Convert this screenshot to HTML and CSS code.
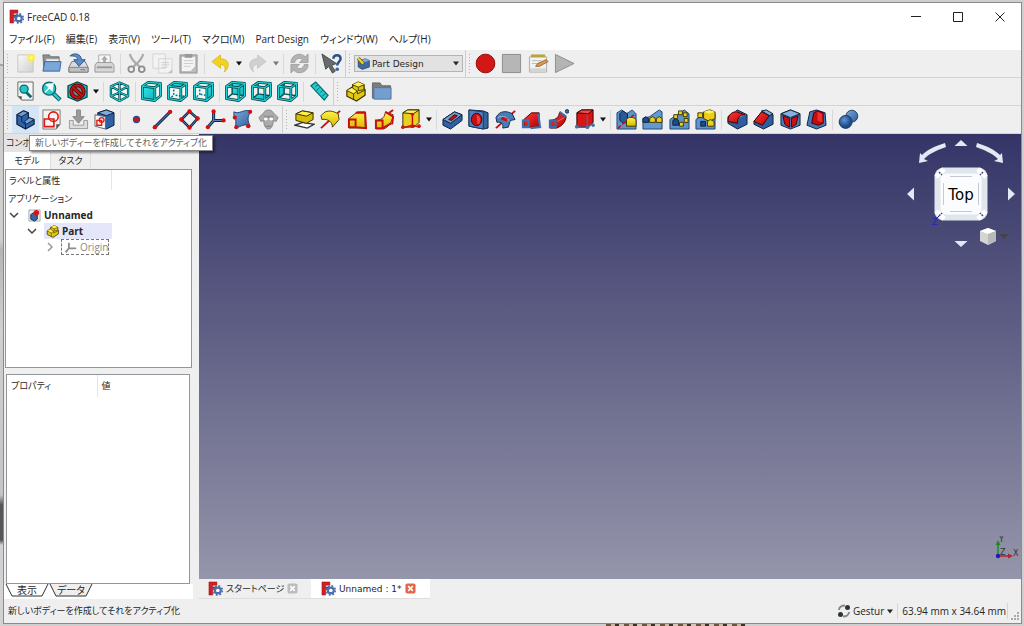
FILE: index.html
```html
<!DOCTYPE html>
<html lang="ja">
<head>
<meta charset="utf-8">
<title>FreeCAD 0.18</title>
<link rel="stylesheet" href="styles.css">
</head>
<body>
<svg class="sprite" aria-hidden="true">
<defs>
<linearGradient id="gGrey" x1="0" y1="0" x2="1" y2="1"><stop offset="0" stop-color="#fafafa"/><stop offset="1" stop-color="#d0d0d0"/></linearGradient>
<linearGradient id="gYel" x1="0" y1="0" x2="0" y2="1"><stop offset="0" stop-color="#fff04a"/><stop offset="1" stop-color="#d8b800"/></linearGradient>
<linearGradient id="gBlue" x1="0" y1="0" x2="1" y2="1"><stop offset="0" stop-color="#7fabd9"/><stop offset="1" stop-color="#2b5a9b"/></linearGradient>
<linearGradient id="gRed" x1="0" y1="0" x2="1" y2="1"><stop offset="0" stop-color="#f83b3b"/><stop offset="1" stop-color="#bb0000"/></linearGradient>
<linearGradient id="gTeal" x1="0" y1="0" x2="1" y2="1"><stop offset="0" stop-color="#35e5e8"/><stop offset="1" stop-color="#0bb5ba"/></linearGradient>
<radialGradient id="gGlow"><stop offset="0" stop-color="#fffde0"/><stop offset=".4" stop-color="#fff12e"/><stop offset="1" stop-color="#fff12e" stop-opacity="0"/></radialGradient>
<radialGradient id="gBall" cx=".4" cy=".35"><stop offset="0" stop-color="#5e97d6"/><stop offset="1" stop-color="#1f4a86"/></radialGradient>
</defs>
<symbol id="logo" viewBox="0 0 16 16"><path d="M1 1h8.500v3.500H5v2h4v3H5v5.500H1z" fill="#d01f26" stroke="#8d0e13" stroke-width=".5"/><circle cx="10.500" cy="10" r="4.800" fill="none" stroke="#4a6fae" stroke-width="1.800" stroke-dasharray="2 1.770"/><circle cx="10.500" cy="10" r="3" fill="none" stroke="#4a6fae" stroke-width="2.400"/><circle cx="10.500" cy="10" r="1.700" fill="#fff"/></symbol>
<symbol id="new" viewBox="0 0 22 22"><path d="M3 2h16v18H3z" fill="url(#gGrey)" stroke="#c5c5c0"/><circle cx="17" cy="5" r="5.500" fill="url(#gGlow)"/></symbol>
<symbol id="open" viewBox="0 0 22 22"><path d="M2 2h7l1 2h9v4H5L3 17z" fill="#8b8e8c" stroke="#6e7170"/><path d="M5 6h14v6H5z" fill="#efefef" stroke="#999"/><path d="M4 9h17l-1.500 10H2z" fill="#7aa6d8" stroke="#3c689f"/></symbol>
<symbol id="save" viewBox="0 0 22 22"><path d="M4 9h14l3 6v5H1v-5z" fill="#dcdcdc" stroke="#777"/><path d="M1 15h20v5H1z" fill="#c0c0c0" stroke="#808080"/><path d="M2 3c5-4 12-2 12 4h4l-6.500 7L6 7h4c0-3-3-4-8-4z" fill="#5d8bc3" stroke="#2b588f"/><path d="M13 17.500h5" stroke="#777"/></symbol>
<symbol id="print" viewBox="0 0 22 22"><path d="M5 2h12v9H5z" fill="#f7f7f7" stroke="#aaa"/><path d="m11 3 3.500 4h-2v3h-3V7h-2z" fill="#aaa"/><path d="M3 10h16l2 3v7H1v-7z" fill="#d7d7d7" stroke="#999"/><path d="M3 14h16v2H3z" fill="#999"/></symbol>
<symbol id="cut" viewBox="0 0 22 22"><path d="M4 1c1 5 5 9 10 13M18 1c-1 5-5 9-10 13" fill="none" stroke="#aaa" stroke-width="2.200"/><circle cx="5.500" cy="17" r="3" fill="none" stroke="#8d8d8d" stroke-width="1.900"/><circle cx="16.500" cy="17" r="3" fill="none" stroke="#8d8d8d" stroke-width="1.900"/></symbol>
<symbol id="copy" viewBox="0 0 22 22"><path d="M1 1h13v15H1zM7 6h14v15H7z" fill="#f3f3f3" stroke="#d4d4d4"/><path d="M10 10h8M10 12.500h8M10 15h6" stroke="#cdcdcd"/><path d="m17 21 4-4v4z" fill="#c0c0c0"/></symbol>
<symbol id="paste" viewBox="0 0 22 22"><path d="M2 2h18v19H2z" fill="#b4b4b4" stroke="#999"/><path d="M4 4h14v15H4z" fill="#f4f4f4"/><path d="M7 1h8v4H7z" fill="#999"/><path d="M6 8h10M6 11h10M6 14h7" stroke="#ccc"/><path d="m13 19 5-5v5z" fill="#bbb"/></symbol>
<symbol id="undo" viewBox="0 0 22 22"><path d="M2 9 11 2v4c9 0 11 8 4 14 2-5 0-8-4-8v4z" fill="#f2d322" stroke="#d3b60a" stroke-width=".8"/></symbol>
<symbol id="redo" viewBox="0 0 22 22"><path d="M20 9 11 2v4C2 6 0 14 7 20c-2-5 0-8 4-8v4z" fill="#d0d0d0" stroke="#c3c3c3" stroke-width=".8"/></symbol>
<symbol id="refresh" viewBox="0 0 22 22"><path d="M2 10c0-9 11-11 15-6l3-3v9h-9l3-3c-3-3-7-1-8 3zM20 12c0 9-11 11-15 6l-3 3v-9h9l-3 3c3 3 7 1 8-3z" fill="#b3b3b3" stroke="#999" stroke-width=".8"/></symbol>
<symbol id="whats" viewBox="0 0 22 22"><path d="m1 1 4 16 3-3 4 7 3-2-4-6 5-2z" fill="#666b6b" stroke="#454848"/><path d="M13 6c0-5 7.500-5 7.500 0 0 3-3.500 3-3.500 7" fill="none" stroke="#28518a" stroke-width="2.600"/><circle cx="17" cy="17" r="1.900" fill="#3465a4"/></symbol>
<symbol id="record" viewBox="0 0 22 22"><circle cx="11" cy="11" r="9.800" fill="#d41616" stroke="#8a0707"/></symbol>
<symbol id="stop" viewBox="0 0 22 22"><path d="M1.500 1.500h19v19h-19z" fill="#b6b6b6" stroke="#8b8b8b"/></symbol>
<symbol id="macro" viewBox="0 0 22 22"><path d="M1.500 4h18v16h-18z" fill="#f2f2f0" stroke="#aaa" /><path d="M2 16h17v4H2z" fill="#d4d4d2"/><path d="M3 1.500h15v3H3z" fill="#b5a642"/><path d="M4 8h10M4 11h6" stroke="#bbb"/><path d="m8 14 2-3 9-4 2 2-9 5z" fill="#e8953c" stroke="#70451b" stroke-width=".7"/></symbol>
<symbol id="play" viewBox="0 0 22 22"><path d="m1.500 1.500 19.500 9.500-19.500 9.500z" fill="#b4b4b4" stroke="#8c8c8c"/></symbol>
<symbol id="fitall" viewBox="0 0 22 22"><path d="M3 1h16v19H7l-4-4z" fill="#f4f4f2" stroke="#666"/><path d="m3 16 4 4v-4z" fill="#555"/><path d="m12 12 5 5" stroke="#096b70" stroke-width="3"/><circle cx="9.500" cy="8.500" r="4.300" fill="#22c7cb" stroke="#0a6a6e" stroke-width="1.300"/></symbol>
<symbol id="fitsel" viewBox="0 0 22 22"><path d="m13 13 7 7" stroke="#0a5a5e" stroke-width="4.500"/><path d="m13 13 6.500 6.500" stroke="#22cdd0" stroke-width="2.500"/><circle cx="8.500" cy="8" r="6.800" fill="#35c9cc" stroke="#0a6a6e" stroke-width="1.500"/><path d="m4 12 5-5M6 4l6.500-1-1 6.500z" fill="#fff" stroke="#e9ffff" stroke-width="1.600"/></symbol>
<symbol id="draw" viewBox="0 0 22 22"><path d="m11 1 10 4v12l-10 4-10-4V5z" fill="#18bcc0" stroke="#063c40" stroke-width="1.200"/><circle cx="11" cy="11" r="6.500" fill="#6d8587" stroke="#420000" stroke-width="4"/><circle cx="11" cy="11" r="6.500" fill="none" stroke="#c81313" stroke-width="2.400"/><path d="m6.500 7 9 8" stroke="#420000" stroke-width="4"/><path d="m6 6.500 10 9" stroke="#c81313" stroke-width="2.500"/></symbol>
<symbol id="iso" viewBox="0 0 22 22"><path d="m11 1.500 9 4V16l-9 5-9-5V5.500zM2 5.500l9 5 9-5M11 10.500V21M11 1.500V12L2 16M11 12l9 4" fill="#effafa" stroke="#063f43" stroke-width="2.400" stroke-linejoin="round"/><path d="m11 1.500 9 4V16l-9 5-9-5V5.500zM2 5.500l9 5 9-5M11 10.500V21M11 1.500V12L2 16M11 12l9 4" fill="none" stroke="#1ecbd0" stroke-width="1.100"/></symbol>
<symbol id="wire" viewBox="0 0 22 22"><path d="m1.500 5.500 13 1.500v13.500l-13-2zM1.500 5.500l6-4 13 1-6 4.500M20.500 2.500v13l-6 5" fill="none" stroke="#063f43" stroke-width="2.800" stroke-linejoin="round"/><path d="m1.500 5.500 13 1.500v13.500l-13-2zM1.500 5.500l6-4 13 1-6 4.500M20.500 2.500v13l-6 5" fill="none" stroke="#1fd0d4" stroke-width="1.300"/></symbol>
<symbol id="vfront" viewBox="0 0 22 22"><path d="m1.500 5.500 6-4 13 1v13l-6 5-13-2z" fill="#eefafa"/><path d="m1.500 5.500 13 1.500v13.500l-13-2z" fill="url(#gTeal)"/><use href="#wire" width="22" height="22"/></symbol>
<symbol id="vtop" viewBox="0 0 22 22"><path d="m1.500 5.500 6-4 13 1v13l-6 5-13-2z" fill="#eefafa"/><path d="m1.500 5.500 6-4 13 1-6 4.500z" fill="url(#gTeal)"/><path d="M7 9v6l-4 3M9 15l9 1" fill="none" stroke="#08777b" stroke-width="1.600" stroke-dasharray="2 1.500"/><use href="#wire" width="22" height="22"/></symbol>
<symbol id="vright" viewBox="0 0 22 22"><path d="m1.500 5.500 6-4 13 1v13l-6 5-13-2z" fill="#eefafa"/><path d="m14.500 7 6-4.500v13l-6 5z" fill="url(#gTeal)"/><path d="M7 9v5l-4 3M8 14l5 1" fill="none" stroke="#08777b" stroke-width="1.600" stroke-dasharray="2 1.500"/><use href="#wire" width="22" height="22"/></symbol>
<symbol id="vrear" viewBox="0 0 22 22"><path d="M7.500 1.500 20.500 2.500v13l-13-2z" fill="url(#gTeal)"/><path d="M7.500 2v11.500l-6 5M7.500 13.500l13 2" fill="none" stroke="#075357" stroke-width="1.500"/><use href="#wire" width="22" height="22"/></symbol>
<symbol id="vbottom" viewBox="0 0 22 22"><path d="m1.500 18.500 6-5 13 2-6 5z" fill="url(#gTeal)"/><path d="M7.500 2v11.500l-6 5M7.500 13.500l13 2" fill="none" stroke="#075357" stroke-width="1.500"/><use href="#wire" width="22" height="22"/></symbol>
<symbol id="vleft" viewBox="0 0 22 22"><path d="m1.500 5.500 6-4v12l-6 5z" fill="url(#gTeal)"/><path d="M7.500 2v11.500l-6 5M7.500 13.500l13 2" fill="none" stroke="#075357" stroke-width="1.500"/><use href="#wire" width="22" height="22"/></symbol>
<symbol id="ruler" viewBox="0 0 22 22"><path d="m2 5 5-4 13 14-4 5z" fill="#22c9cd" stroke="#08676b" stroke-width="1.200"/><path d="m9 4-2 2m4 1-3 3m6 0-2 2m5 1-3 3" stroke="#08575b"/></symbol>
<symbol id="part" viewBox="0 0 22 22"><path d="m2 10 6-4V4l6-3 6 3v4l1 1v6l-9 6-10-5z" fill="#e3c811" stroke="#3a3300" stroke-width="1.300" stroke-linejoin="round"/><path d="m8 4 6 2 6-2-6-3zM2 10l6-3 5 3-4 3z" fill="#fff05a"/><path d="m2 10 7 3.500 4-3-5-3M8 4v3.500M8 4l6 2.500L20 4M14 6.500V10l7-1M9 13.500V19M13 10.500v3l8-4" fill="none" stroke="#4a4200" stroke-width="1"/></symbol>
<symbol id="group" viewBox="0 0 22 22"><path d="M1.500 2h8l2 3h9v13h-19z" fill="#7a7d7b" stroke="#666"/><path d="M3 7h18v12H3z" fill="#739fd0" stroke="#5178a8"/></symbol>
<symbol id="body" viewBox="0 0 22 22"><path d="m2 6 7-4 5 2v5l6 2v5l-9 5-9-5z" fill="#2f62a6" stroke="#0d2240" stroke-width="1.300" stroke-linejoin="round"/><path d="m2 6 7-4 5 2-7 4zM10 13l5-4 5 2-8 5z" fill="#739fd0" stroke="#0d2240"/><path d="M7 8v5l4 3v5" fill="none" stroke="#0d2240"/></symbol>
<symbol id="sketch" viewBox="0 0 22 22"><path d="M2 1h18v15l-4 5H2z" fill="#f4f4f2" stroke="#777"/><path d="M3.500 10.500h10v8h-10z" fill="none" stroke="#e01818" stroke-width="1.700"/><circle cx="13" cy="8" r="5" fill="none" stroke="#e01818" stroke-width="1.700"/><path d="M20 16h-4v5z" fill="#555"/></symbol>
<symbol id="attach" viewBox="0 0 22 22"><path d="M1.500 12h4v5h11v-5h4v8.500h-19z" fill="#ddd" stroke="#999"/><path d="M9 1h4v7h4l-6 7-6-7h4z" fill="#9a9a9a" stroke="#868686"/></symbol>
<symbol id="mapsk" viewBox="0 0 22 22"><path d="m4 4 9-3 8 3v13l-8 4-9-4z" fill="#2e60a4" stroke="#0d2240"/><path d="m4 4 9-3 8 3-8 3z" fill="#80abdc" stroke="#0d2240"/><path d="m1 6 11 2v13L1 18z" fill="#f4f4f2" stroke="#666"/><path d="M3 12h5v5H3z" fill="none" stroke="#e01818" stroke-width="1.400"/><circle cx="8" cy="11.500" r="2.500" fill="none" stroke="#e01818" stroke-width="1.400"/></symbol>
<symbol id="point" viewBox="0 0 22 22"><circle cx="11" cy="11" r="3.200" fill="#d80d15" stroke="#274e8d" stroke-width="1.300"/></symbol>
<symbol id="line" viewBox="0 0 22 22"><path d="M3 19 19 3" stroke="#102548" stroke-width="3"/><path d="M3 19 19 3" stroke="#456fa9" stroke-width="1.300"/><circle cx="3" cy="19" r="2.300" fill="#d80d0d"/><circle cx="19" cy="3" r="2.300" fill="#d80d0d"/></symbol>
<symbol id="plane" viewBox="0 0 22 22"><path d="m11 2.500 8.500 7.500-8.500 9.500L2.500 11z" fill="#eee" stroke="#102548" stroke-width="2.800"/><path d="m11 2.500 8.500 7.500-8.500 9.500L2.500 11z" fill="none" stroke="#5682ba"/><circle cx="11" cy="2.500" r="2.300" fill="#d80d0d"/><circle cx="19.500" cy="10" r="2.300" fill="#d80d0d"/><circle cx="11" cy="19.500" r="2.300" fill="#d80d0d"/><circle cx="2.500" cy="11" r="2.300" fill="#d80d0d"/></symbol>
<symbol id="csys" viewBox="0 0 22 22"><path d="M9 2.500V12h11M9 12l-6 7" fill="none" stroke="#102548" stroke-width="3.200"/><path d="M9 2.500V12h11M9 12l-6 7" fill="none" stroke="#5682ba" stroke-width="1.200"/><circle cx="9" cy="2.500" r="2.200" fill="#d80d0d"/><circle cx="19.500" cy="12" r="2.200" fill="#d80d0d"/><circle cx="3" cy="19" r="2.200" fill="#d80d0d"/></symbol>
<symbol id="binder" viewBox="0 0 22 22"><path d="M2 3c6 3 9-3 18-1-4 6-4 10-1 16-6-3-9 0-15 2V11L2 9z" fill="url(#gBlue)" stroke="#20467e"/><circle cx="3" cy="9" r="2.200" fill="#d80d0d"/><circle cx="19" cy="3" r="2.200" fill="#d80d0d"/><circle cx="17" cy="18" r="2.200" fill="#d80d0d"/><circle cx="4.500" cy="19" r="2.200" fill="#d80d0d"/></symbol>
<symbol id="clone" viewBox="0 0 22 22"><path d="M6 4c2-4 8-4 10 0l5 5-2 4-3-1c0 5-2 9-5 9s-5-4-5-9l-3 1-2-4z" fill="#acacac" stroke="#858585"/><path d="M6 7h10v3H6z" fill="#929292"/><ellipse cx="8.200" cy="10.500" rx="2" ry="1.500" fill="#fff"/><ellipse cx="13.800" cy="10.500" rx="2" ry="1.500" fill="#fff"/><path d="M8 18h6" stroke="#777"/></symbol>
<symbol id="pad" viewBox="0 0 22 22"><path d="m1 17 8-3 12 2-7 4z" fill="#fff" stroke="#333" stroke-width="1.500"/><path d="m2 5 7-3 11 2v7l-7 4-11-3z" fill="#d9bd0b" stroke="#332c00"/><path d="m2 5 7-3 11 2-7 3.500z" fill="#fff044" stroke="#332c00"/></symbol>
<symbol id="rev" viewBox="0 0 22 22"><path d="M1 20 21 2" stroke="#c20f0f" stroke-width="2"/><path d="m1 7 3-3c4-3 10-2 15 1l1 6-7 8c0-5-4-9-11-8z" fill="url(#gYel)" stroke="#4a3f00"/></symbol>
<symbol id="loft" viewBox="0 0 22 22"><path d="m2 10 9-7h8v17H2z" fill="url(#gYel)" stroke="#722"/><path d="M2 11h7v8H2zM9 4h10l1 16-11-1" fill="none" stroke="#c70e0e" stroke-width="2"/></symbol>
<symbol id="pipe" viewBox="0 0 22 22"><path d="M2 12c8-1 9-4 10-9l8 3c-1 8-5 13-10 15H2z" fill="url(#gYel)" stroke="#722"/><path d="M2 12h7v8H2zM12 3l8 5-1 8M16 4l4-3M9 20l9-5" fill="none" stroke="#c70e0e" stroke-width="2"/></symbol>
<symbol id="addbox" viewBox="0 0 22 22"><path d="m3 4 5-3h12v13l-5 5H3z" fill="#e8cf22" stroke="#332c00"/><path d="m3 4 5-3h12l-6 4z" fill="#fff35b" stroke="#332c00"/><path d="M13 5v12L2 20M13 17l7 2" fill="none" stroke="#c70e0e" stroke-width="1.500"/><circle cx="13" cy="5.500" r="1.700" fill="#d80d0d"/><circle cx="3" cy="19" r="1.900" fill="#d80d0d"/><circle cx="13" cy="18" r="1.900" fill="#d80d0d"/><circle cx="20" cy="18" r="1.900" fill="#d80d0d"/></symbol>
<symbol id="pocket" viewBox="0 0 22 22"><path d="m1 11 12-8 8 3v6l-12 9-8-4z" fill="#2f61a4" stroke="#0d2240"/><path d="m1 11 12-8 8 3-12 9z" fill="#779fcd" stroke="#0d2240"/><path d="m7 11 6-5 3 1-6 5z" fill="#d40d0d" stroke="#4a0000"/></symbol>
<symbol id="hole" viewBox="0 0 22 22"><path d="m1 1 15 1 5 2v16l-5 1-15-3z" fill="#34659f" stroke="#0d2240"/><path d="m1 1 15 2v18L1 18z" fill="#4d80bd" stroke="#17345f"/><ellipse cx="9" cy="11" rx="5.500" ry="6.500" fill="#cc0d0d" stroke="#3d0712"/><path d="M9 6c5 1 5 9 1 10" fill="#ef4343"/></symbol>
<symbol id="groove" viewBox="0 0 22 22"><path d="M1 20 21 2" stroke="#c20f0f" stroke-width="2"/><path d="M1 9C5 1 13 2 18 5l3 6-5 1-2 7-6 1c1-4-1-7-6-6z" fill="#4a7db6" stroke="#102c50"/><path d="m8 7 6 3-2 3-6-2z" fill="#cb1111"/><path d="M3 9c6-3 10 0 12 4" fill="none" stroke="#97bfe4"/></symbol>
<symbol id="sloft" viewBox="0 0 22 22"><path d="m3 11 8-7h8v15H3z" fill="url(#gRed)" stroke="#510000"/><path d="M2 12h6v7H2zM18 5l2 14-10 1" fill="none" stroke="#416fa9" stroke-width="2.200"/></symbol>
<symbol id="spipe" viewBox="0 0 22 22"><path d="M2 12c8-1 9-4 10-8l7 4c-1 7-5 10-10 12H2z" fill="url(#gRed)" stroke="#510000"/><path d="M2 12h6v7H2zM12 3l7 5" fill="none" stroke="#3d6ba5" stroke-width="2.200"/><path d="m10 13 7-4" stroke="#ef6a5a"/><circle cx="20" cy="2.500" r="1.900" fill="#3d6ba5" stroke="#183762"/></symbol>
<symbol id="subbox" viewBox="0 0 22 22"><path d="m3 4 5-3h12v13l-5 5H3z" fill="#d81515" stroke="#300"/><path d="m3 4 5-3h12l-5 4z" fill="#f64a4a" stroke="#300"/><path d="M14 5v14l6-4M3 19h11" fill="none" stroke="#41699d" stroke-width="1.400"/><circle cx="3" cy="18.500" r="2" fill="#426fa8"/><circle cx="14" cy="19" r="2" fill="#426fa8"/><circle cx="20" cy="17" r="1.800" fill="#426fa8"/></symbol>
<symbol id="base" viewBox="0 0 22 22"><path d="M1 11 16 1l5 4v16H1z" fill="#5e92cc" stroke="#1c4678"/></symbol>
<symbol id="mirror" viewBox="0 0 22 22"><path d="M1 13V4l5-3 5 4 6-4 4 4v16H1z" fill="#5e92cc" stroke="#1c4678"/><path d="m4 5 3-3 5 3v8l-4 2-4-3z" fill="#295997" stroke="#0d2240"/><path d="m2 20 17-14" stroke="#c20f0f" stroke-width="1.500" stroke-dasharray="4 2"/><path d="M11 11c2-3 7-3 10 0v7H11z" fill="url(#gYel)" stroke="#413700"/></symbol>
<symbol id="linpat" viewBox="0 0 22 22"><path d="m1 10 7-2L18 1l3 2v18H1z" fill="#6598d0" stroke="#1c4678"/><path d="m1 10 3-2 3 2v4H1z" fill="#1e4c8b" stroke="#0d2240"/><path d="m8 10 3-2 3 2v4H8zm7 0 3-2 3 2v4h-6z" fill="#edcf17" stroke="#413700"/></symbol>
<symbol id="polpat" viewBox="0 0 22 22"><use href="#base" width="22" height="22"/><path d="m4 12 3-2 3 2v5H4z" fill="#1e4c8b" stroke="#0d2240"/><path d="M5 6h4v4H5zm5-4h4v4h-4zm5 2h4v4h-4zm1 6h4v4h-4zm-5 4h4v4h-4z" fill="#f1d51b" stroke="#413700"/></symbol>
<symbol id="multi" viewBox="0 0 22 22"><use href="#base" width="22" height="22"/><path d="m9 3 6-2 6 2v7l-6 3-6-3z" fill="#eacf18" stroke="#413700"/><path d="m9 3 6 2 6-2-6-2z" fill="#fff25b"/><path d="M3 4h5v5H3z" fill="#efd218" stroke="#413700"/><path d="M6 13h5v5H6z" fill="#1e4c8b" stroke="#0d2240"/><path d="m13 13 3-2 4 2v5h-7z" fill="#efd218" stroke="#413700"/></symbol>
<symbol id="fillet" viewBox="0 0 22 22"><path d="M1 8 11 1l10 5v10l-10 5-10-6z" fill="#2d5e9f" stroke="#0d2240"/><path d="m9 2 11 4-7 3-9-4z" fill="#7caada"/><path d="M1 13C1 6 5 3 10 3l9 3c-6 0-8 3-8 9z" fill="url(#gRed)" stroke="#450000"/></symbol>
<symbol id="chamfer" viewBox="0 0 22 22"><path d="m1 13 9-11 11 4v10l-10 5-10-5z" fill="#2d5e9f" stroke="#0d2240"/><path d="m9 2 5-1 7 4-4 2z" fill="#7caada" stroke="#0d2240"/><path d="m1 13 8-10 8 4-7 10z" fill="url(#gRed)" stroke="#450000"/></symbol>
<symbol id="draft" viewBox="0 0 22 22"><path d="m1 5 10-4 10 4v12l-10 4-10-4z" fill="#4a7fbc" stroke="#0d2240"/><path d="m3 7 7 3v9l-5-3zm16 0-7 3v9l5-3z" fill="#d60c0c" stroke="#450000"/><path d="m1 5 10 4 10-4-10-4z" fill="#86b1df" stroke="#0d2240"/></symbol>
<symbol id="thick" viewBox="0 0 22 22"><path d="m4 3 7-2 9 3 1 13-10 4-10-4z" fill="#4679b5" stroke="#0d2240"/><path d="m8 4 4-2 6 2v11l-5 2-7-2z" fill="#c50c0c" stroke="#450000"/><path d="m12 3 5 2v9l-5-2z" fill="#ee3030"/></symbol>
<symbol id="bool" viewBox="0 0 22 22"><circle cx="14.500" cy="7.500" r="6.200" fill="url(#gBlue)" stroke="#1d416f"/><circle cx="8" cy="13.500" r="6.800" fill="url(#gBall)" stroke="#153966"/></symbol>
<symbol id="doc" viewBox="0 0 14 14"><path d="M1 1h12v12H1z" fill="#eee" stroke="#aaa"/><path d="m3 6 3-2 4 2v5l-3 2-4-2z" fill="#3465a4" stroke="#142b50"/><circle cx="9" cy="4" r="3" fill="#d61616"/></symbol>
<symbol id="origin" viewBox="0 0 16 14"><path d="M6 1v7h9M6 8l-4 5" fill="none" stroke="#8b8b8b" stroke-width="2.200"/></symbol>
<symbol id="nav" viewBox="0 0 14 14"><path d="M2 6c0-3 3-4.500 6-4.500M12 8c0 3-3 4.500-6 4.500" fill="none" stroke="#888" stroke-width="2"/><circle cx="10.500" cy="3.500" r="2.500" fill="#293538"/><circle cx="3.500" cy="10.500" r="2.500" fill="#293538"/></symbol>
<symbol id="down" viewBox="0 0 8 5"><path d="M1 .5h6L4 4.500z" fill="currentColor"/></symbol>
<symbol id="x" viewBox="0 0 12 12"><rect x=".5" y=".5" width="11" height="11" rx="2" fill="currentColor"/><path d="m3.500 3.500 5 5m0-5-5 5" stroke="#fff" stroke-width="1.800"/></symbol>
</svg>

<div class="window">
  <header class="titlebar">
    <svg class="app-logo" aria-hidden="true"><use href="#logo"/></svg>
    <h1 class="title">FreeCAD 0.18</h1>
    <div class="caption-buttons">
      <button class="caption" aria-label="最小化"><svg viewBox="0 0 10 10"><path d="M0 4.500h10"/></svg></button>
      <button class="caption" aria-label="最大化"><svg viewBox="0 0 10 10"><path d="M.5.5h9v9h-9z"/></svg></button>
      <button class="caption" aria-label="閉じる"><svg viewBox="0 0 10 10"><path d="m.5.5 9 9m0-9-9 9"/></svg></button>
    </div>
  </header>

  <nav class="menubar">
    <button class="menu">ファイル(F)</button><button class="menu">編集(E)</button><button class="menu">表示(V)</button><button class="menu">ツール(T)</button><button class="menu">マクロ(M)</button><button class="menu">Part Design</button><button class="menu">ウィンドウ(W)</button><button class="menu">ヘルプ(H)</button>
  </nav>

  <div class="toolrow">
    <div class="toolbar">
      <div class="group g4"><button class="tool" aria-label="新規"><svg><use href="#new"/></svg></button><button class="tool" aria-label="開く"><svg><use href="#open"/></svg></button><button class="tool" aria-label="保存"><svg><use href="#save"/></svg></button><button class="tool" aria-label="印刷"><svg><use href="#print"/></svg></button></div>
      <i class="sep"></i>
      <div class="group g3"><button class="tool" aria-label="切り取り"><svg><use href="#cut"/></svg></button><button class="tool" aria-label="コピー"><svg><use href="#copy"/></svg></button><button class="tool" aria-label="貼り付け"><svg><use href="#paste"/></svg></button></div>
      <i class="sep"></i>
      <div class="group g1"><button class="tool" aria-label="元に戻す"><svg><use href="#undo"/></svg></button></div><button class="more" aria-label="元に戻す履歴"><svg><use href="#down"/></svg></button>
      <div class="group g1"><button class="tool" aria-label="やり直す"><svg><use href="#redo"/></svg></button></div><button class="more dim" aria-label="やり直し履歴"><svg><use href="#down"/></svg></button>
      <i class="sep"></i>
      <div class="group g1"><button class="tool" aria-label="更新"><svg><use href="#refresh"/></svg></button></div>
      <i class="sep"></i>
      <div class="group g1"><button class="tool" aria-label="これは何?"><svg><use href="#whats"/></svg></button></div>
    </div>
    <div class="toolbar">
      <div class="workbench"><svg class="wb-icon" aria-hidden="true" viewBox="0 0 22 22"><path d="m2 6 12-3 7 3v11l-12 4-7-4z" fill="#3a6bab" stroke="#15305a"/><path d="m2 6 12-3 7 3-12 4z" fill="#7fa9d8"/><path d="m2 2 9 10" stroke="#5a4a00" stroke-width="6"/><path d="m2 2 8.500 9.500" stroke="#f0d52a" stroke-width="4"/></svg><select class="wb-select" aria-label="ワークベンチ"><option>Part Design</option></select><svg class="wb-arrow" aria-hidden="true"><use href="#down"/></svg></div>
    </div>
    <div class="toolbar last tight">
      <div class="group g4"><button class="tool" aria-label="マクロ記録"><svg><use href="#record"/></svg></button><button class="tool" aria-label="停止"><svg><use href="#stop"/></svg></button><button class="tool" aria-label="マクロ"><svg><use href="#macro"/></svg></button><button class="tool" aria-label="実行"><svg><use href="#play"/></svg></button></div>
    </div>
  </div>

  <div class="toolrow">
    <div class="toolbar">
      <div class="group g3"><button class="tool" aria-label="全てにフィット"><svg><use href="#fitall"/></svg></button><button class="tool" aria-label="選択にフィット"><svg><use href="#fitsel"/></svg></button><button class="tool" aria-label="描画スタイル"><svg><use href="#draw"/></svg></button></div><button class="more" aria-label="描画スタイル一覧"><svg><use href="#down"/></svg></button>
      <i class="sep"></i>
      <div class="group g1"><button class="tool" aria-label="等角投影"><svg><use href="#iso"/></svg></button></div>
      <i class="sep"></i>
      <div class="group g3"><button class="tool" aria-label="正面"><svg><use href="#vfront"/></svg></button><button class="tool" aria-label="上面"><svg><use href="#vtop"/></svg></button><button class="tool" aria-label="右面"><svg><use href="#vright"/></svg></button></div>
      <i class="sep"></i>
      <div class="group g3"><button class="tool" aria-label="背面"><svg><use href="#vrear"/></svg></button><button class="tool" aria-label="底面"><svg><use href="#vbottom"/></svg></button><button class="tool" aria-label="左面"><svg><use href="#vleft"/></svg></button></div>
      <i class="sep"></i>
      <div class="group g1"><button class="tool" aria-label="距離を測定"><svg><use href="#ruler"/></svg></button></div>
    </div>
    <div class="toolbar last">
      <div class="group g2"><button class="tool" aria-label="パーツを作成"><svg><use href="#part"/></svg></button><button class="tool" aria-label="グループを作成"><svg><use href="#group"/></svg></button></div>
    </div>
  </div>

  <div class="toolrow">
    <div class="toolbar">
      <div class="group g4"><button class="tool hover" aria-label="ボディーを作成" aria-describedby="tip"><svg><use href="#body"/></svg></button><button class="tool" aria-label="スケッチを作成"><svg><use href="#sketch"/></svg></button><button class="tool" aria-label="スケッチを編集"><svg><use href="#attach"/></svg></button><button class="tool" aria-label="スケッチを面にマップ"><svg><use href="#mapsk"/></svg></button></div>
      <i class="sep"></i>
      <div class="group g6"><button class="tool" aria-label="データム点"><svg><use href="#point"/></svg></button><button class="tool" aria-label="データム線"><svg><use href="#line"/></svg></button><button class="tool" aria-label="データム面"><svg><use href="#plane"/></svg></button><button class="tool" aria-label="座標系"><svg><use href="#csys"/></svg></button><button class="tool" aria-label="シェイプバインダー"><svg><use href="#binder"/></svg></button><button class="tool" aria-label="クローン"><svg><use href="#clone"/></svg></button></div>
    </div>
    <div class="toolbar last">
      <div class="group g5"><button class="tool" aria-label="パッド"><svg><use href="#pad"/></svg></button><button class="tool" aria-label="回転押し出し"><svg><use href="#rev"/></svg></button><button class="tool" aria-label="加算ロフト"><svg><use href="#loft"/></svg></button><button class="tool" aria-label="加算パイプ"><svg><use href="#pipe"/></svg></button><button class="tool" aria-label="加算ボックス"><svg><use href="#addbox"/></svg></button></div><button class="more" aria-label="加算プリミティブ"><svg><use href="#down"/></svg></button>
      <i class="sep"></i>
      <div class="group g6"><button class="tool" aria-label="ポケット"><svg><use href="#pocket"/></svg></button><button class="tool" aria-label="ホール"><svg><use href="#hole"/></svg></button><button class="tool" aria-label="グルーブ"><svg><use href="#groove"/></svg></button><button class="tool" aria-label="減算ロフト"><svg><use href="#sloft"/></svg></button><button class="tool" aria-label="減算パイプ"><svg><use href="#spipe"/></svg></button><button class="tool" aria-label="減算ボックス"><svg><use href="#subbox"/></svg></button></div><button class="more" aria-label="減算プリミティブ"><svg><use href="#down"/></svg></button>
      <i class="sep"></i>
      <div class="group g4"><button class="tool" aria-label="鏡像"><svg><use href="#mirror"/></svg></button><button class="tool" aria-label="直線パターン"><svg><use href="#linpat"/></svg></button><button class="tool" aria-label="円形パターン"><svg><use href="#polpat"/></svg></button><button class="tool" aria-label="マルチ変換"><svg><use href="#multi"/></svg></button></div>
      <i class="sep"></i>
      <div class="group g4"><button class="tool" aria-label="フィレット"><svg><use href="#fillet"/></svg></button><button class="tool" aria-label="面取り"><svg><use href="#chamfer"/></svg></button><button class="tool" aria-label="抜き勾配"><svg><use href="#draft"/></svg></button><button class="tool" aria-label="厚み"><svg><use href="#thick"/></svg></button></div>
      <i class="sep"></i>
      <div class="group g1"><button class="tool" aria-label="ブーリアン"><svg><use href="#bool"/></svg></button></div>
    </div>
    <div class="tooltip" id="tip" role="tooltip">新しいボディーを作成してそれをアクティブ化</div>
  </div>

  <main class="workspace">
    <aside class="dock">
      <h2 class="dock-title">コンボ</h2>
      <div class="tabs"><button class="tab active">モデル</button><button class="tab">タスク</button></div>
      <section class="panel tree">
        <div class="columns"><span class="column label">ラベルと属性</span></div>
        <div class="row root">アプリケーション</div>
        <div class="row"><svg class="chev" viewBox="0 0 10 10"><path d="m1 3 4 4 4-4"/></svg><svg class="node"><use href="#doc"/></svg><b class="name">Unnamed</b></div>
        <div class="row level1"><svg class="chev" viewBox="0 0 10 10"><path d="m1 3 4 4 4-4"/></svg><span class="item selected"><svg class="node"><use href="#part"/></svg><b class="name">Part</b></span></div>
        <div class="row level2"><svg class="chev faint" viewBox="0 0 10 10"><path d="m3 1 4 4-4 4"/></svg><span class="item focus"><svg class="node"><use href="#origin"/></svg><span class="name">Origin</span></span></div>
      </section>
      <section class="panel props">
        <table class="prop-table"><thead><tr><th class="prop-name">プロパティ</th><th>値</th></tr></thead></table>
      </section>
      <div class="bottom-tabs">
        <button class="slant front"><svg viewBox="0 0 44 13" preserveAspectRatio="none"><path d="m1 0 6 12h30l6-12" /></svg><span>表示</span></button><button class="slant"><svg viewBox="0 0 44 13" preserveAspectRatio="none"><path d="m1 0 6 12h30l6-12"/></svg><span>データ</span></button>
      </div>
    </aside>
    <section class="document">
      <div class="view">
        <svg class="navcube" viewBox="0 0 112 112" role="img" aria-label="Top">
          <g fill="#e3e9f2"><path d="m56 3 6.500 6h-13zM56 110l6.500-6h-13zM2 57l7-6.500v13zM110 57l-7-6.500v13z"/>
          <path d="m17 21 2 1c5-5 11-8 22-12l-1-4c-10 3-18 7-23 12l-2-2-1 10 9-2zM95 21l-2 1c-5-5-11-8-22-12l1-4c10 3 18 7 23 12l2-2 1 10-9-2z"/></g>
          <rect x="29.500" y="30.500" width="53" height="53" rx="9" fill="#dfe6ee"/>
          <path d="m31 40 8-8M73 32l8 8M31 74l8 8M73 82l8-8" stroke="#fff" stroke-width="5"/>
          <rect x="35.500" y="36.500" width="41" height="41" rx="5" fill="#fbfcfe"/>
          <path d="M45 39.500h22M45 74.500h22M38.500 46v22M73.500 46v22" stroke="#c5c8d2"/>
          <path d="m34 35 3 3M78 35l-3 3M34 79l3-3M78 79l-3-3" stroke="#424283" stroke-width="1.500" stroke-dasharray="2 1"/>
          <text class="cube-label" x="56" y="63" text-anchor="middle">Top</text>
          <path d="m34 79-3 3" stroke="#2020c0"/><text class="axis-z" x="27" y="88">Z</text>
          <path d="m83 91-8 3v10l8 4 8-4V94z" fill="#d5d5d5"/><path d="m75 94 8-3 8 3-8 3z" fill="#fff"/><path d="m83 97 8-3v10l-8 4z" fill="#b9b9b9"/>
          <path d="M94 97h10l-5 5z" fill="#444"/>
        </svg>
        <svg class="axes" viewBox="0 0 26 26" aria-hidden="true"><path d="M5 20V7" stroke="#198c26" stroke-width="1.500"/><path d="m5 4 2.500 5h-5z" fill="#198c26"/><path d="M5 20h12" stroke="#a92727" stroke-width="1.500"/><path d="m20 20-5-2.500v5z" fill="#a92727"/><circle cx="5" cy="20" r="2.200" fill="#1a1ac8"/><text x="6" y="6">Y</text><text x="20" y="20">X</text><text x="7" y="19">Z</text></svg>
      </div>
      <div class="doc-tabs">
        <div class="doc-tab"><svg class="tab-logo"><use href="#logo"/></svg><span>スタートページ</span><button class="close" aria-label="閉じる"><svg><use href="#x"/></svg></button></div>
        <div class="doc-tab current"><svg class="tab-logo"><use href="#logo"/></svg><span>Unnamed : 1*</span><button class="close red" aria-label="閉じる"><svg><use href="#x"/></svg></button></div>
      </div>
    </section>
  </main>

  <footer class="status">
    <span class="message">新しいボディーを作成してそれをアクティブ化</span>
    <button class="nav-style"><svg class="nav-icon"><use href="#nav"/></svg>Gestur<svg class="small-arrow"><use href="#down"/></svg></button>
    <span class="dims">63.94 mm x 34.64 mm</span>
    <svg class="grip" viewBox="0 0 10 10"><path d="M8 2v0M8 5v0M5 5v0M8 8v0M5 8v0M2 8v0"/></svg>
  </footer>
</div>
</body>
</html>
```

FILE: styles.css
```css
* { box-sizing: border-box; }

body {
  margin: 0;
  min-height: 100vh;
  padding: 2px 2px 2px 3px;
  display: flex;
  background:
    repeating-linear-gradient(90deg, #6b543f 0 5px, #c9b9a4 5px 9px, #3d3026 9px 13px, #d2c7b8 13px 18px) 606px 100% / 140px 2px no-repeat,
    linear-gradient(#dcdcdc 0 64px, #a5a5a5 64px 66px, #cfcfcf 66px 240px, #b5b5b5 250px, #d0d0d0 330px, #c4c4c4 495px, #555 505px 540px, #d2d2d2 545px) 0 0 / 3px 100% no-repeat,
    #cfcfcf;
  color: #262626;
  font: 10px/16px "Open Sans", "Noto Sans CJK JP", sans-serif;
  font-feature-settings: "palt";
}

button, select {
  font: inherit;
  font-feature-settings: inherit;
  color: inherit;
  background: none;
  border: 0;
  padding: 0;
  margin: 0;
}

svg { display: block; flex: none; }
.sprite { position: absolute; width: 0; height: 0; }

.window {
  flex: 1;
  min-width: 0;
  display: flex;
  flex-direction: column;
  background: #efefef;
  border: 1px solid #8a8a8a;
}

.titlebar {
  display: flex;
  align-items: center;
  height: 27px;
  padding-left: 5px;
  background: #fff;
}
.app-logo { width: 15px; height: 15px; }
.title { flex: 1; margin: 0 0 0 3px; font-size: 10px; font-weight: 400; }
.caption-buttons { display: flex; }
.caption { width: 42px; height: 24px; display: grid; place-items: center; }
.caption svg { width: 10px; height: 10px; fill: none; stroke: #222; }

.menubar {
  display: flex;
  align-items: flex-start;
  gap: 11px;
  height: 20px;
  padding-left: 5px;
  background: #fff;
  line-height: 18px;
}

.toolrow {
  position: relative;
  display: flex;
  height: 28px;
  border-bottom: 1px solid #d3d3d3;
}
.toolbar {
  display: flex;
  align-items: center;
  padding-left: 8px;
  border-right: 1px solid #cfcfcf;
  background: repeating-linear-gradient(#b2b2b2 0 1px, transparent 1px 3px) 3px 4px / 1px 20px no-repeat;
}
.toolbar.last { border-right: 0; }
.toolbar.tight { padding-left: 6px; }
.group { display: grid; grid-auto-flow: column; grid-auto-columns: 1fr; }
.g1 { width: 27px; }
.g2 { width: 53px; }
.g3 { width: 79px; }
.g4 { width: 106px; }
.g5 { width: 133px; }
.g6 { width: 159px; }
.tool { display: grid; place-items: center; height: 27px; }
.tool svg { width: 21px; height: 21px; }
.tool.hover { background: #d5e5f3; }
.more { width: 10px; height: 27px; display: grid; place-items: center; color: #111; }
.more svg { width: 8px; height: 5px; }
.more.dim { color: #777; }
.sep { width: 1px; height: 20px; margin: 0 2px; background: #d8d8d8; }

.workbench { position: relative; margin-right: 2px; }
.wb-icon { position: absolute; left: 3px; top: 2px; width: 13px; height: 13px; }
.wb-arrow { position: absolute; right: 3px; top: 6px; width: 8px; height: 5px; }
.wb-select {
  display: block;
  appearance: none;
  width: 109px;
  height: 17px;
  padding-left: 17px;
  border: 1px solid #b4b4b4;
  background: #e2e2e2;
  font-family: "DejaVu Sans", sans-serif;
  font-size: 9px;
}

.tooltip {
  position: absolute;
  z-index: 2;
  left: 25px;
  top: 29px;
  padding: 0 5px;
  background: #fff;
  border: 1px solid #858585;
  box-shadow: 2px 2px 2px #0006;
  color: #606060;
  font-size: 9px;
  line-height: 14px;
  white-space: nowrap;
}

.workspace { flex: 1; display: flex; min-height: 0; }
.dock { width: 195px; display: flex; flex-direction: column; padding-right: 6px; }
.dock-title { height: 18px; margin: 0; padding-left: 2px; font-size: 9px; font-weight: 400; line-height: 18px; background: #e4e4e4; }
.tabs { display: flex; height: 17px; font-size: 9px; }
.tab { width: 40px; border-right: 1px solid #ddd; line-height: 17px; }
.tab.active { width: 47px; background: #fff; }

.panel { background: #fff; border: 1px solid #93969d; }
.tree { height: 199px; margin: 0 1px; }
.columns { display: flex; height: 20px; margin-bottom: 1px; }
.column { width: 106px; padding-left: 3px; border-right: 1px solid #e5e5e5; font-size: 9px; line-height: 22px; }
.row { display: flex; align-items: center; height: 16px; padding-left: 3px; }
.root { padding-left: 2px; font-size: 9px; }
.level1 { padding-left: 21px; }
.level2 { padding-left: 39px; }
.chev { width: 10px; height: 10px; fill: none; stroke: #444; stroke-width: 1.5; }
.chev.faint { stroke: #999; }
.node { width: 13px; height: 13px; margin: 0 3px 0 2px; }
.chev + .node { margin-left: 9px; }
.item { display: flex; align-items: center; height: 16px; margin-left: 7px; }
.selected { width: 68px; background: #e6e6fa; }
.focus { margin-left: 6px; border: 1px dashed #777; color: #8b8b8b; }

.props { flex: 1; margin: 6px 3px 0 2px; }
.prop-table { width: 100%; border-collapse: collapse; }
.prop-table th { padding: 0 4px; font-size: 9px; font-weight: 400; text-align: left; line-height: 22px; }
.prop-table .prop-name { width: 90px; border-right: 1px solid #e5e5e5; }

.bottom-tabs { display: flex; height: 15px; padding-left: 1px; background: #fff; }
.slant { position: relative; width: 44px; height: 13px; line-height: 13px; }
.slant svg { position: absolute; inset: 0; width: 44px; height: 13px; fill: #efefef; stroke: #333; }
.slant.front svg { fill: #fff; }
.slant span { position: relative; }

.document { flex: 1; min-width: 0; display: flex; flex-direction: column; }
.view { position: relative; flex: 1; background: linear-gradient(#343467, #9595ab); }
.navcube { position: absolute; right: 4px; top: 3px; width: 112px; height: 112px; }
.cube-label { font: 15px "DejaVu Sans", sans-serif; fill: #000; }
.axis-z { font: 8px "DejaVu Sans", sans-serif; fill: #2020c0; }
.axes { position: absolute; right: 2px; bottom: 17px; width: 26px; height: 26px; font: 8px "DejaVu Sans", sans-serif; fill: #333; }

.doc-tabs { display: flex; height: 20px; font-family: "DejaVu Sans", "Noto Sans CJK JP", sans-serif; font-size: 9px; }
.doc-tab { display: flex; align-items: center; gap: 3px; width: 112px; padding-left: 9px; border-bottom: 1px solid #ddd; white-space: nowrap; }
.doc-tab.current { width: 119px; padding-left: 10px; background: #fff; }
.tab-logo { width: 15px; height: 15px; }
.close { color: #bcbcbc; }
.close.red { color: #e0674a; }
.close svg { width: 11px; height: 11px; }

.status { display: flex; align-items: center; height: 24px; padding-left: 4px; }
.message { flex: 1; font-size: 9px; }
.nav-style { display: flex; align-items: center; gap: 2px; padding-right: 3px; }
.nav-icon { width: 14px; height: 14px; }
.small-arrow { width: 8px; height: 5px; }
.dims { padding: 0 1px 0 4px; border-left: 1px solid #d5d5d5; border-right: 1px solid #d5d5d5; }
.grip { align-self: flex-end; width: 10px; height: 10px; margin: 0 1px 2px 2px; stroke: #aaa; stroke-width: 2; stroke-linecap: square; }
```
